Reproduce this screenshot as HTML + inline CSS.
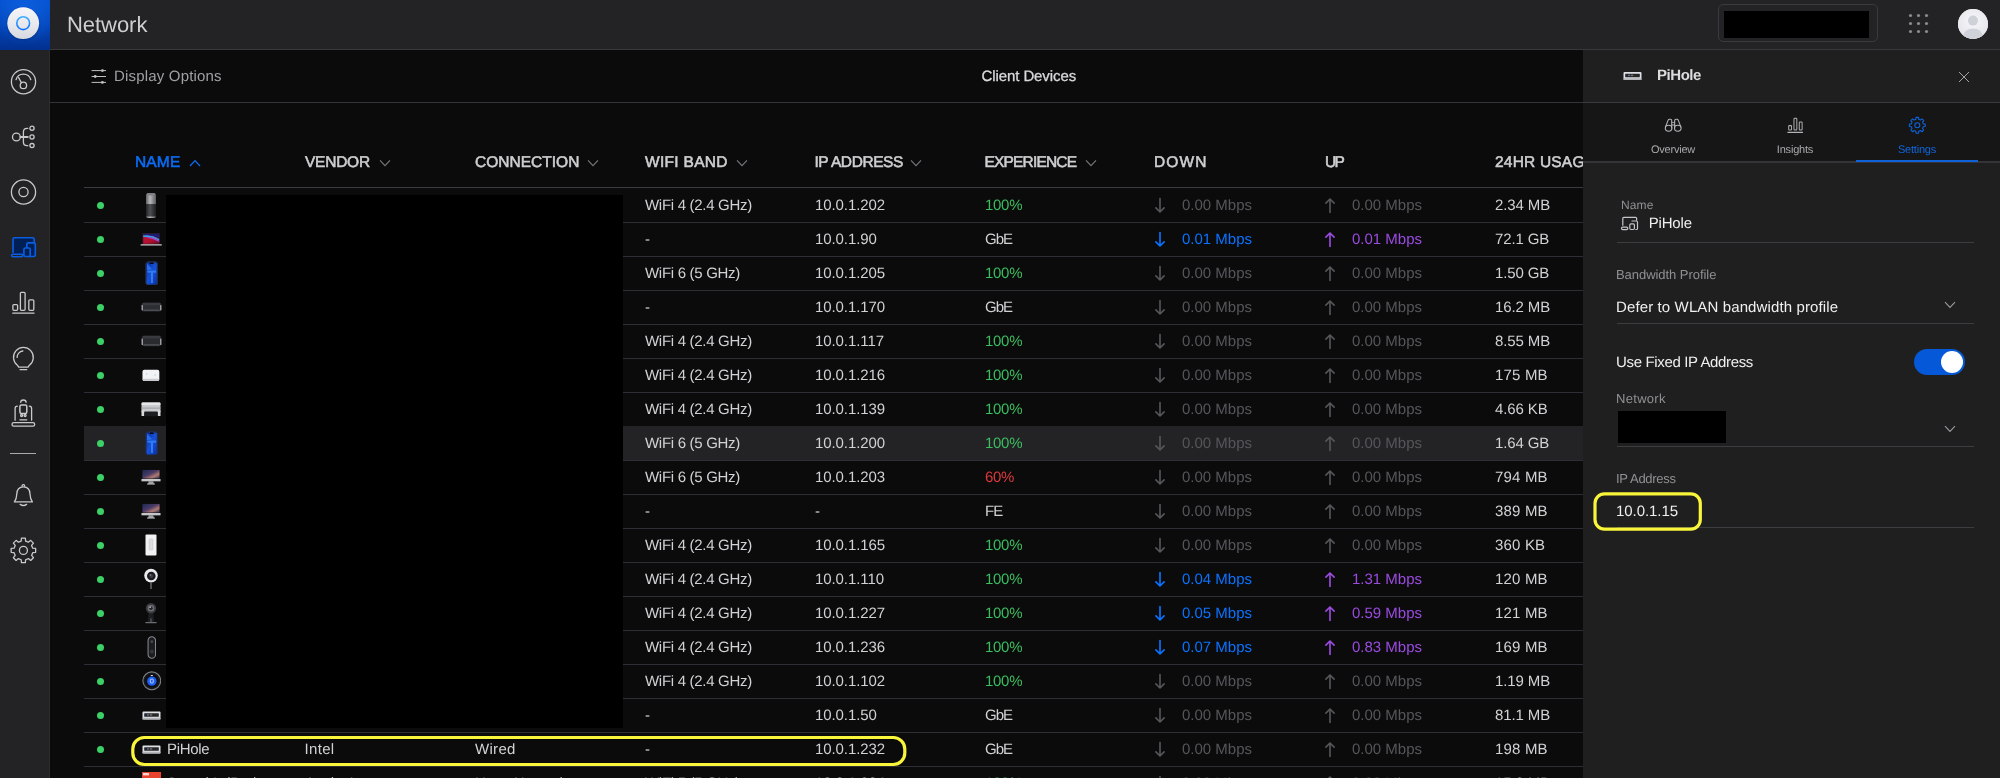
<!DOCTYPE html>
<html lang="en">
<head>
<meta charset="utf-8">
<title>Network - Client Devices</title>
<style>
*{box-sizing:border-box;margin:0;padding:0}
html,body{width:2000px;height:778px;overflow:hidden;background:#0b0b0c}
body{position:relative;will-change:transform;text-rendering:geometricPrecision;font-family:"Liberation Sans","DejaVu Sans",sans-serif;color:#d5d5d7;font-size:15px}
.abs{position:absolute}
/* top bar */
#top{position:absolute;left:0;top:0;width:2000px;height:50px;background:#232325;border-bottom:1px solid #38383c}
#logo{position:absolute;left:0;top:0;width:50px;height:50px;background:radial-gradient(circle at 50% 30%,rgba(20,110,240,.55) 0%,rgba(20,110,240,0) 70%),linear-gradient(180deg,#0654d2 0%,#0446bb 50%,#02308e 100%)}
#title{position:absolute;left:67px;top:10.5px;font-size:22px;line-height:28px;color:#cfcfd1;letter-spacing:-.05px}
#sitebox{position:absolute;left:1718px;top:4.4px;width:160px;height:38px;border:1px solid #3a3a3e;border-radius:5px}
#sitebox i{position:absolute;left:5px;top:5.6px;width:145px;height:27px;background:#000}
#avatar{position:absolute;left:1958.3px;top:8.6px;width:30px;height:30px;border-radius:50%;background:#f1f1f4;overflow:hidden}
/* side */
#side{position:absolute;left:0;top:50px;width:50px;height:728px;background:#232325;border-right:1px solid #2d2d30}
#side svg{position:absolute;left:0;overflow:visible}
/* subheader */
#sub{position:absolute;left:50px;top:50px;width:1533px;height:53px;border-bottom:1px solid #34353b}
#dopt{position:absolute;left:64px;top:17.1px;font-size:15px;line-height:20px;color:#9fa0a4;letter-spacing:.18px}
#ctitle{position:absolute;left:.8px;width:1956px;top:17.2px;text-align:center;font-size:15px;line-height:20px;color:#dadadc;letter-spacing:-.1px;-webkit-text-stroke:.3px #dadadc}
/* table */
.th{position:absolute;top:153.2px;font-size:15.5px;line-height:20px;font-weight:normal;-webkit-text-stroke:.55px;color:#cfcfd1;letter-spacing:.1px;white-space:nowrap}
.th svg{position:absolute;top:5.8px}
#hline{position:absolute;left:84px;top:187px;width:1499px;height:1px;background:#3a3b41}
.row{position:absolute;left:84px;width:1499px;height:35px;border-bottom:1px solid #2e2f34;line-height:33px;white-space:nowrap}
.row.hov{background:#232325}
.dot{position:absolute;left:13.3px;top:13.5px;width:7px;height:7px;border-radius:50%;background:#3cd067}
.ic{position:absolute;left:52.4px;top:0;width:30px;height:34px;display:flex;align-items:center;justify-content:center}
.ic svg{display:block}
.c{position:absolute;top:1.2px;font-size:15px;letter-spacing:-.3px;color:#d2d2d4}
.c.nm{left:83px}
.c.ip{letter-spacing:-.08px}.c.x{letter-spacing:-1px}.c.us{letter-spacing:-.12px}.c.sp{letter-spacing:0}
.c.g{color:#3bbd5f}.c.r{color:#dd393c}
.c.sp{color:#55565a}.c.sp.b{color:#0a72ff}.c.sp.p{color:#9a4be0}
.c.sp b{font-weight:normal;position:absolute;left:27px;top:0}
.ar{position:absolute;left:-1px;top:7px}
#redact{position:absolute;left:166px;top:195.3px;width:456.6px;height:533px;background:#000}
.hl{position:absolute;border:3.1px solid #f9f53a;border-radius:12px}
/* panel */
#panel{position:absolute;left:1583px;top:50px;width:417px;height:728px;background:#1f1f20}
#phead{position:absolute;left:0;top:0;width:417px;height:53px;border-bottom:1px solid #3a3b40}
#ptabs{position:absolute;left:0;top:53px;width:417px;background:#161617;border-bottom:2px solid #343438;height:60px}
.tab{position:absolute;top:0;width:122px;height:58px;text-align:center;font-size:11px;color:#a9a9ac;letter-spacing:-.2px}
.tab span{position:absolute;left:0;width:100%;top:40px;line-height:14px}
.tab svg{position:absolute;top:13.5px;left:50%;margin-left:-10px}
.tab.on{color:#1166dc}
.lbl{position:absolute;left:33px;font-size:13px;line-height:16px;color:#909093;letter-spacing:-.3px}
.val{position:absolute;left:33px;font-size:15px;line-height:20px;color:#efeff0;letter-spacing:-.35px}
.ul{position:absolute;left:34px;width:357px;height:1px;background:#3c3d41}
.chev{position:absolute;left:361px}
</style>
</head>
<body>
<!-- ===== top bar ===== -->
<div id="top">
  <div id="logo"><svg width="50" height="50" viewBox="0 0 50 50"><defs><linearGradient id="lg1" x1="0" y1="0" x2="0" y2="1"><stop offset="0" stop-color="#f6f6f9"/><stop offset=".55" stop-color="#e7e8ed"/><stop offset="1" stop-color="#d8d9e0"/></linearGradient><linearGradient id="lg2" x1="0" y1="0" x2="0" y2="1"><stop offset="0" stop-color="#3fb0ff"/><stop offset="1" stop-color="#0d72ff"/></linearGradient><filter id="lsh" x="-20%" y="-20%" width="140%" height="140%"><feGaussianBlur stdDeviation=".9"/></filter></defs><circle cx="23.2" cy="24" r="16" fill="#001a5a" opacity=".45" filter="url(#lsh)"/><circle cx="23.2" cy="23.2" r="15.9" fill="url(#lg1)"/><circle cx="23.2" cy="23.2" r="6.4" fill="none" stroke="url(#lg2)" stroke-width="1.6"/></svg></div>
  <div id="title">Network</div>
  <div id="sitebox"><i></i></div>
  <svg class="abs" style="left:1907px;top:12px" width="23" height="23" viewBox="0 0 23 23" fill="#8b8b8e">
    <circle cx="3.5" cy="3.5" r="1.6"/><circle cx="11.5" cy="3.5" r="1.6"/><circle cx="19.5" cy="3.5" r="1.6"/>
    <circle cx="3.5" cy="11.5" r="1.6"/><circle cx="11.5" cy="11.5" r="1.6"/><circle cx="19.5" cy="11.5" r="1.6"/>
    <circle cx="3.5" cy="19.5" r="1.6"/><circle cx="11.5" cy="19.5" r="1.6"/><circle cx="19.5" cy="19.5" r="1.6"/>
  </svg>
  <div id="avatar"><svg width="30" height="30" viewBox="0 0 30 30"><defs><filter id="avb"><feGaussianBlur stdDeviation=".7"/></filter><radialGradient id="av" cx=".5" cy=".4" r=".6"><stop offset="0" stop-color="#f7f7fa"/><stop offset="1" stop-color="#e4e5ea"/></radialGradient></defs><rect width="30" height="30" fill="url(#av)"/><g filter="url(#avb)"><circle cx="15" cy="11.6" r="5" fill="#cfd1d9"/><path d="M5 30 Q5 19.6 15 19.6 Q25 19.6 25 30Z" fill="#d0d2da"/></g></svg></div>
</div>

<!-- ===== sidebar ===== -->
<div id="side">
<svg style="top:18px" width="50" height="28" viewBox="0 0 50 28" fill="none" stroke="#c9c9cc" stroke-width="1.3" stroke-linecap="round" stroke-linejoin="round"><circle cx="23.5" cy="13.7" r="12.1"/><path d="M16 11.7 A7.7 7.7 0 0 1 30.8 11.7"/><path d="M18.6 9.6 L21.4 14.7"/><circle cx="23.4" cy="17.4" r="3.2"/></svg>
<svg style="top:74px" width="50" height="26" viewBox="0 0 50 26" fill="none" stroke="#c9c9cc" stroke-width="1.3" stroke-linecap="round" stroke-linejoin="round"><circle cx="16.4" cy="13" r="3.9"/><path d="M20.4 13 H27.8" stroke-width="1.9"/><path d="M27.8 4.3 H27 Q23.4 4.3 23.4 8 V18 Q23.4 21.7 27 21.7 H27.8"/><circle cx="32" cy="4.3" r="2.1"/><circle cx="32" cy="13" r="2.1"/><circle cx="32" cy="21.6" r="2.1"/></svg>
<svg style="top:128px" width="50" height="28" viewBox="0 0 50 28" fill="none" stroke="#c9c9cc" stroke-width="1.3" stroke-linecap="round" stroke-linejoin="round"><circle cx="23.5" cy="14" r="12.1"/><circle cx="23.5" cy="14" r="4.6"/></svg>
<svg style="top:185px" width="50" height="24" viewBox="0 0 50 24" fill="none" stroke="#0a5fe0" stroke-width="1.6" stroke-linecap="round" stroke-linejoin="round"><rect x="13" y="2.8" width="21.2" height="16" fill="#001f55" stroke="none"/><path d="M13 17.4 V4.2 Q13 2.8 14.4 2.8 H32.8 Q34.2 2.8 34.2 4.2 V7.6"/><rect x="11.7" y="19.2" width="11" height="2.6" rx="1.3" fill="#232325"/><rect x="26.8" y="7.9" width="8.5" height="13.6" rx="1.7" fill="#001f55"/><rect x="23.9" y="13" width="6.3" height="8.5" rx="1.5" fill="#001f55"/></svg>
<svg style="top:240px" width="50" height="26" viewBox="0 0 50 26" fill="none" stroke="#c9c9cc" stroke-width="1.3" stroke-linecap="round" stroke-linejoin="round"><rect x="12.9" y="14.6" width="4.7" height="5.7" rx="1"/><rect x="20.4" y="2.3" width="4.7" height="18" rx="1"/><rect x="28.8" y="9.8" width="5" height="10.5" rx="1"/><path d="M12.8 23.2 H34"/></svg>
<svg style="top:295px" width="50" height="28" viewBox="0 0 50 28" fill="none" stroke="#c9c9cc" stroke-width="1.3" stroke-linecap="round" stroke-linejoin="round"><path d="M18.7 22.1 L17.4 20.2 A9.9 9.9 0 1 1 29.4 20.2 L28.1 22.1 Z"/><path d="M17.1 12.4 A6.4 6.4 0 0 1 22.8 6"/><path d="M20.1 24.7 H26.7"/></svg>
<svg style="top:347px" width="50" height="32" viewBox="0 0 50 32" fill="none" stroke="#c9c9cc" stroke-width="1.3" stroke-linecap="round" stroke-linejoin="round"><path d="M20.7 5.3 Q20.7 3 23.4 3 Q26.1 3 26.1 5.3"/><rect x="19.9" y="8.1" width="6.9" height="8.5" rx="1.5" stroke-width="1.5"/><circle cx="21.6" cy="18.5" r="1"/><circle cx="25.1" cy="18.5" r="1"/><path d="M19.9 22.8 H26.8"/><path d="M15.1 23.2 V11.5 Q15.1 9.2 17.3 9.2"/><path d="M31.6 23.2 V11.5 Q31.6 9.2 29.4 9.2"/><rect x="12" y="25.7" width="22.7" height="3.5" rx="1.75"/></svg>
<div style="position:absolute;left:10px;top:403px;width:26px;height:1.4px;background:#aaaaad"></div>
<svg style="top:431px" width="50" height="28" viewBox="0 0 50 28" fill="none" stroke="#c9c9cc" stroke-width="1.3" stroke-linecap="round" stroke-linejoin="round"><path d="M22.1 5.2 Q22.1 3.6 23.4 3.6 Q24.7 3.6 24.7 5.2"/><path d="M14.4 20.9 Q16.6 18 16.8 13 Q17 5.8 23.4 5.8 Q29.8 5.8 30 13 Q30.2 18 32.4 20.9 Z"/><path d="M20.2 23.4 Q23.4 25.6 26.6 23.4"/></svg>
<svg style="top:486px" width="50" height="29" viewBox="0 0 50 29" fill="none" stroke="#c9c9cc" stroke-width="1.3" stroke-linecap="round" stroke-linejoin="round"><path d="M21.46 2.15 L25.34 2.15 L25.64 5.07 L28.42 6.21 L30.69 4.37 L33.43 7.11 L31.59 9.38 L32.73 12.16 L35.65 12.46 L35.65 16.34 L32.73 16.64 L31.59 19.42 L33.43 21.69 L30.69 24.43 L28.42 22.59 L25.64 23.73 L25.34 26.65 L21.46 26.65 L21.16 23.73 L18.38 22.59 L16.11 24.43 L13.37 21.69 L15.21 19.42 L14.07 16.64 L11.15 16.34 L11.15 12.46 L14.07 12.16 L15.21 9.38 L13.37 7.11 L16.11 4.37 L18.38 6.21 L21.16 5.07Z" stroke-linejoin="round"/><circle cx="23.4" cy="14.4" r="4"/></svg>
</div>

<!-- ===== sub header ===== -->
<div id="sub">
  <svg class="abs" style="left:41px;top:19px" width="16" height="15" viewBox="0 0 16 15" fill="none" stroke="#c0c1c4" stroke-width="1" stroke-linecap="round">
    <path d="M1 1.6 H14.6 M1 7.5 H14.6 M1 13.4 H14.6"/><circle cx="11.4" cy="1.6" r="1.45" fill="#c0c1c4" stroke="none"/><circle cx="4.2" cy="7.5" r="1.45" fill="#c0c1c4" stroke="none"/><circle cx="11.4" cy="13.4" r="1.45" fill="#c0c1c4" stroke="none"/>
  </svg>
  <div id="dopt">Display Options</div>
  <div id="ctitle">Client Devices</div>
</div>

<!-- ===== table header ===== -->
<div class="th" style="left:135px;color:#0a6cf5;letter-spacing:0.17px">NAME<svg style="left:54px" width="12" height="8" viewBox="0 0 12 8"><path d="M1 7 L6 1.6 L11 7" fill="none" stroke="#0a6cf5" stroke-width="1.3"/></svg></div>
<div class="th" style="left:305px;letter-spacing:-0.24px">VENDOR<svg style="left:74px" width="12" height="8" viewBox="0 0 12 8"><path d="M1 1.4 L6 6.6 L11 1.4" fill="none" stroke="#77787c" stroke-width="1.1"/></svg></div>
<div class="th" style="left:475px;letter-spacing:0.02px">CONNECTION<svg style="left:112px" width="12" height="8" viewBox="0 0 12 8"><path d="M1 1.4 L6 6.6 L11 1.4" fill="none" stroke="#77787c" stroke-width="1.1"/></svg></div>
<div class="th" style="left:645px;letter-spacing:0.3px">WIFI BAND<svg style="left:91px" width="12" height="8" viewBox="0 0 12 8"><path d="M1 1.4 L6 6.6 L11 1.4" fill="none" stroke="#77787c" stroke-width="1.1"/></svg></div>
<div class="th" style="left:814.4px;letter-spacing:-0.42px">IP ADDRESS<svg style="left:96px" width="12" height="8" viewBox="0 0 12 8"><path d="M1 1.4 L6 6.6 L11 1.4" fill="none" stroke="#77787c" stroke-width="1.1"/></svg></div>
<div class="th" style="left:984.5px;letter-spacing:-0.82px">EXPERIENCE<svg style="left:100px" width="12" height="8" viewBox="0 0 12 8"><path d="M1 1.4 L6 6.6 L11 1.4" fill="none" stroke="#77787c" stroke-width="1.1"/></svg></div>
<div class="th" style="left:1154px;letter-spacing:1.13px">DOWN</div>
<div class="th" style="left:1325px;letter-spacing:-1.6px">UP</div>
<div class="th" style="left:1495px;letter-spacing:0.2px">24HR USAGE</div>
<div id="hline"></div>

<!-- ===== rows ===== -->
<div class="row" style="top:188px"><i class="dot"></i><span class="ic"><svg width="12" height="27" viewBox="0 0 12 27"><defs><linearGradient id="eg" x1="0" x2="1"><stop offset="0" stop-color="#5f6165"/><stop offset=".4" stop-color="#b6b7ba"/><stop offset="1" stop-color="#5a5c60"/></linearGradient><linearGradient id="eg2" x1="0" x2="1"><stop offset="0" stop-color="#222325"/><stop offset=".4" stop-color="#4d4f53"/><stop offset="1" stop-color="#1d1e20"/></linearGradient></defs><rect x="1" y="1" width="10" height="25" rx="2.6" fill="url(#eg)"/><path d="M1 12 H11 V23.4 Q11 24.6 9.8 24.6 H2.2 Q1 24.6 1 23.4Z" fill="url(#eg2)"/><ellipse cx="6" cy="2.2" rx="4.4" ry="1.2" fill="#7d7f84"/></svg></span><span class="c" style="left:561px">WiFi 4 (2.4 GHz)</span><span class="c ip" style="left:731px">10.0.1.202</span><span class="c g" style="left:901px">100%</span><span class="c sp " style="left:1071px"><svg class="ar" width="12" height="18" viewBox="0 0 12 18"><path d="M6 2.5 V16 M1.9 11.9 L6 16 L10.1 11.9" fill="none" stroke="currentColor" stroke-width="1.65" stroke-linecap="round" stroke-linejoin="round"/></svg><b>0.00 Mbps</b></span><span class="c sp " style="left:1241px"><svg class="ar" width="12" height="18" viewBox="0 0 12 18"><path d="M6 16.5 V3 M1.9 7.1 L6 3 L10.1 7.1" fill="none" stroke="currentColor" stroke-width="1.65" stroke-linecap="round" stroke-linejoin="round"/></svg><b>0.00 Mbps</b></span><span class="c us" style="left:1411px;letter-spacing:-0.12px">2.34 MB</span></div>
<div class="row" style="top:222px"><i class="dot"></i><span class="ic"><svg width="22.4" height="13" viewBox="0 0 24 14"><defs><linearGradient id="mg" x1="0" y1="0" x2="1" y2="1"><stop offset="0" stop-color="#c4143a"/><stop offset=".6" stop-color="#b00f30"/><stop offset="1" stop-color="#5e0a22"/></linearGradient></defs><rect x="3" y="0.5" width="18" height="11.5" fill="url(#mg)" stroke="#1c1c20" stroke-width=".8"/><path d="M3.4 0.9 H20.6 V6.2 Q13 1.6 3.4 3.2 Z" fill="#1b1d74"/><path d="M3.4 2.8 Q12 1.4 20.6 6.4 L20.6 8 Q12 3.6 3.4 4.4Z" fill="#38a2e8"/><path d="M8 4 Q15 5 20.6 8.2 L20.6 9.8 Q14 6.4 8 5.2Z" fill="#a845d8"/><rect x="0.5" y="12.2" width="23" height="1.3" rx=".6" fill="#c9cacc"/></svg></span><span class="c" style="left:561px">-</span><span class="c ip" style="left:731px">10.0.1.90</span><span class="c x" style="left:901px">GbE</span><span class="c sp b" style="left:1071px"><svg class="ar" width="12" height="18" viewBox="0 0 12 18"><path d="M6 2.5 V16 M1.9 11.9 L6 16 L10.1 11.9" fill="none" stroke="currentColor" stroke-width="1.65" stroke-linecap="round" stroke-linejoin="round"/></svg><b>0.01 Mbps</b></span><span class="c sp p" style="left:1241px"><svg class="ar" width="12" height="18" viewBox="0 0 12 18"><path d="M6 16.5 V3 M1.9 7.1 L6 3 L10.1 7.1" fill="none" stroke="currentColor" stroke-width="1.65" stroke-linecap="round" stroke-linejoin="round"/></svg><b>0.01 Mbps</b></span><span class="c us" style="left:1411px;letter-spacing:-0.12px">72.1 GB</span></div>
<div class="row" style="top:256px"><i class="dot"></i><span class="ic"><svg width="13.4" height="24.9" viewBox="0 0 14 26"><defs><linearGradient id="ig" x1="0" y1="0" x2="1" y2="1"><stop offset="0" stop-color="#0a2a9a"/><stop offset=".5" stop-color="#1552d8"/><stop offset="1" stop-color="#0a2c9e"/></linearGradient></defs><rect x="0.9" y="0.9" width="12.2" height="24.2" rx="2.6" fill="url(#ig)" stroke="#232b45" stroke-width="1.3"/><rect x="6.4" y="12" width="1.8" height="11" fill="#3f8dff" opacity=".85"/><rect x="2.4" y="10" width="9.2" height="2.2" fill="#3a86ff" opacity=".8"/><path d="M2 2.4 L7.4 8.6 L2 9.6Z" fill="#2f7dff" opacity=".75"/><rect x="4.8" y="1.6" width="4.4" height="1.4" rx=".7" fill="#05070f"/></svg></span><span class="c" style="left:561px">WiFi 6 (5 GHz)</span><span class="c ip" style="left:731px">10.0.1.205</span><span class="c g" style="left:901px">100%</span><span class="c sp " style="left:1071px"><svg class="ar" width="12" height="18" viewBox="0 0 12 18"><path d="M6 2.5 V16 M1.9 11.9 L6 16 L10.1 11.9" fill="none" stroke="currentColor" stroke-width="1.65" stroke-linecap="round" stroke-linejoin="round"/></svg><b>0.00 Mbps</b></span><span class="c sp " style="left:1241px"><svg class="ar" width="12" height="18" viewBox="0 0 12 18"><path d="M6 16.5 V3 M1.9 7.1 L6 3 L10.1 7.1" fill="none" stroke="currentColor" stroke-width="1.65" stroke-linecap="round" stroke-linejoin="round"/></svg><b>0.00 Mbps</b></span><span class="c us" style="left:1411px;letter-spacing:-0.12px">1.50 GB</span></div>
<div class="row" style="top:290px"><i class="dot"></i><span class="ic"><svg width="21" height="10" viewBox="0 0 21 10"><rect x="0.5" y="0.8" width="20" height="8.6" rx="2.2" fill="#2d2e32"/><rect x="1.6" y="0.8" width="17.8" height="2.4" rx="1.2" fill="#3a3b40"/><rect x="0.6" y="3" width="1.3" height="5.4" rx=".6" fill="#a8aaaf"/><rect x="19.1" y="3" width="1.3" height="5.4" rx=".6" fill="#a8aaaf"/><rect x="2.2" y="7.4" width="16.6" height="1.6" rx=".8" fill="#4b4d52"/></svg></span><span class="c" style="left:561px">-</span><span class="c ip" style="left:731px">10.0.1.170</span><span class="c x" style="left:901px">GbE</span><span class="c sp " style="left:1071px"><svg class="ar" width="12" height="18" viewBox="0 0 12 18"><path d="M6 2.5 V16 M1.9 11.9 L6 16 L10.1 11.9" fill="none" stroke="currentColor" stroke-width="1.65" stroke-linecap="round" stroke-linejoin="round"/></svg><b>0.00 Mbps</b></span><span class="c sp " style="left:1241px"><svg class="ar" width="12" height="18" viewBox="0 0 12 18"><path d="M6 16.5 V3 M1.9 7.1 L6 3 L10.1 7.1" fill="none" stroke="currentColor" stroke-width="1.65" stroke-linecap="round" stroke-linejoin="round"/></svg><b>0.00 Mbps</b></span><span class="c us" style="left:1411px;letter-spacing:-0.12px">16.2 MB</span></div>
<div class="row" style="top:324px"><i class="dot"></i><span class="ic"><svg width="21" height="12" viewBox="0 0 21 12"><rect x="0.5" y="0.8" width="20" height="10.4" rx="2.4" fill="#2a2b2f"/><rect x="1.6" y="0.8" width="17.8" height="2.6" rx="1.3" fill="#393a3f"/><rect x="0.6" y="3.4" width="1.3" height="6.6" rx=".6" fill="#a8aaaf"/><rect x="19.1" y="3.4" width="1.3" height="6.6" rx=".6" fill="#a8aaaf"/><rect x="2.2" y="9" width="16.6" height="1.7" rx=".8" fill="#47494e"/></svg></span><span class="c" style="left:561px">WiFi 4 (2.4 GHz)</span><span class="c ip" style="left:731px">10.0.1.117</span><span class="c g" style="left:901px">100%</span><span class="c sp " style="left:1071px"><svg class="ar" width="12" height="18" viewBox="0 0 12 18"><path d="M6 2.5 V16 M1.9 11.9 L6 16 L10.1 11.9" fill="none" stroke="currentColor" stroke-width="1.65" stroke-linecap="round" stroke-linejoin="round"/></svg><b>0.00 Mbps</b></span><span class="c sp " style="left:1241px"><svg class="ar" width="12" height="18" viewBox="0 0 12 18"><path d="M6 16.5 V3 M1.9 7.1 L6 3 L10.1 7.1" fill="none" stroke="currentColor" stroke-width="1.65" stroke-linecap="round" stroke-linejoin="round"/></svg><b>0.00 Mbps</b></span><span class="c us" style="left:1411px;letter-spacing:-0.12px">8.55 MB</span></div>
<div class="row" style="top:358px"><i class="dot"></i><span class="ic"><svg width="17.8" height="12.8" viewBox="0 0 19 13"><rect x="0.5" y="0.5" width="18" height="12" rx="2" fill="#f2f3f5"/><rect x="1" y="10" width="17" height="2.5" rx="1" fill="#c9cbcf"/><circle cx="5" cy="5" r=".8" fill="#b8c8e8"/><circle cx="14" cy="6" r=".8" fill="#b8c8e8"/></svg></span><span class="c" style="left:561px">WiFi 4 (2.4 GHz)</span><span class="c ip" style="left:731px">10.0.1.216</span><span class="c g" style="left:901px">100%</span><span class="c sp " style="left:1071px"><svg class="ar" width="12" height="18" viewBox="0 0 12 18"><path d="M6 2.5 V16 M1.9 11.9 L6 16 L10.1 11.9" fill="none" stroke="currentColor" stroke-width="1.65" stroke-linecap="round" stroke-linejoin="round"/></svg><b>0.00 Mbps</b></span><span class="c sp " style="left:1241px"><svg class="ar" width="12" height="18" viewBox="0 0 12 18"><path d="M6 16.5 V3 M1.9 7.1 L6 3 L10.1 7.1" fill="none" stroke="currentColor" stroke-width="1.65" stroke-linecap="round" stroke-linejoin="round"/></svg><b>0.00 Mbps</b></span><span class="c us" style="left:1411px;letter-spacing:0.18px">175 MB</span></div>
<div class="row" style="top:392px"><i class="dot"></i><span class="ic"><svg width="20" height="15" viewBox="0 0 20 15"><rect x="0.5" y="0.5" width="19" height="10" rx="1.2" fill="#c9cacd"/><rect x="0.5" y="0.5" width="19" height="2.6" rx="1.2" fill="#e6e7e9"/><rect x="0.5" y="5.6" width="19" height="1" fill="#9c9ea2"/><rect x="3" y="9.6" width="14" height="4.6" rx="1.2" fill="#1c1d20"/><rect x="0.5" y="8.6" width="2.6" height="5.4" fill="#d9dadc"/><rect x="16.9" y="8.6" width="2.6" height="5.4" fill="#d9dadc"/></svg></span><span class="c" style="left:561px">WiFi 4 (2.4 GHz)</span><span class="c ip" style="left:731px">10.0.1.139</span><span class="c g" style="left:901px">100%</span><span class="c sp " style="left:1071px"><svg class="ar" width="12" height="18" viewBox="0 0 12 18"><path d="M6 2.5 V16 M1.9 11.9 L6 16 L10.1 11.9" fill="none" stroke="currentColor" stroke-width="1.65" stroke-linecap="round" stroke-linejoin="round"/></svg><b>0.00 Mbps</b></span><span class="c sp " style="left:1241px"><svg class="ar" width="12" height="18" viewBox="0 0 12 18"><path d="M6 16.5 V3 M1.9 7.1 L6 3 L10.1 7.1" fill="none" stroke="currentColor" stroke-width="1.65" stroke-linecap="round" stroke-linejoin="round"/></svg><b>0.00 Mbps</b></span><span class="c us" style="left:1411px;letter-spacing:-0.12px">4.66 KB</span></div>
<div class="row hov" style="top:426px"><i class="dot"></i><span class="ic"><svg width="13.4" height="24.9" viewBox="0 0 14 26"><defs><linearGradient id="ig" x1="0" y1="0" x2="1" y2="1"><stop offset="0" stop-color="#0a2a9a"/><stop offset=".5" stop-color="#1552d8"/><stop offset="1" stop-color="#0a2c9e"/></linearGradient></defs><rect x="0.9" y="0.9" width="12.2" height="24.2" rx="2.6" fill="url(#ig)" stroke="#232b45" stroke-width="1.3"/><rect x="6.4" y="12" width="1.8" height="11" fill="#3f8dff" opacity=".85"/><rect x="2.4" y="10" width="9.2" height="2.2" fill="#3a86ff" opacity=".8"/><path d="M2 2.4 L7.4 8.6 L2 9.6Z" fill="#2f7dff" opacity=".75"/><rect x="4.8" y="1.6" width="4.4" height="1.4" rx=".7" fill="#05070f"/></svg></span><span class="c" style="left:561px">WiFi 6 (5 GHz)</span><span class="c ip" style="left:731px">10.0.1.200</span><span class="c g" style="left:901px">100%</span><span class="c sp " style="left:1071px"><svg class="ar" width="12" height="18" viewBox="0 0 12 18"><path d="M6 2.5 V16 M1.9 11.9 L6 16 L10.1 11.9" fill="none" stroke="currentColor" stroke-width="1.65" stroke-linecap="round" stroke-linejoin="round"/></svg><b>0.00 Mbps</b></span><span class="c sp " style="left:1241px"><svg class="ar" width="12" height="18" viewBox="0 0 12 18"><path d="M6 16.5 V3 M1.9 7.1 L6 3 L10.1 7.1" fill="none" stroke="currentColor" stroke-width="1.65" stroke-linecap="round" stroke-linejoin="round"/></svg><b>0.00 Mbps</b></span><span class="c us" style="left:1411px;letter-spacing:-0.12px">1.64 GB</span></div>
<div class="row" style="top:460px"><i class="dot"></i><span class="ic"><svg width="20" height="17.6" viewBox="0 0 22 18"><defs><linearGradient id="sg" x1="0" y1="0" x2="1" y2="1"><stop offset="0" stop-color="#1a2a55"/><stop offset=".45" stop-color="#4a3a66"/><stop offset=".72" stop-color="#b07a72"/><stop offset="1" stop-color="#272c48"/></linearGradient></defs><rect x="0.5" y="0.5" width="21" height="13.5" rx="1" fill="#0c0c0e"/><rect x="1.6" y="1.5" width="18.8" height="9.4" fill="url(#sg)"/><rect x="0.5" y="11.4" width="21" height="2.6" fill="#c5c6c9"/><path d="M8.5 14 L13.5 14 L14.2 16.6 L7.8 16.6 Z" fill="#9fa1a5"/><rect x="6.5" y="16.4" width="9" height="1.1" rx=".5" fill="#d4d5d8"/></svg></span><span class="c" style="left:561px">WiFi 6 (5 GHz)</span><span class="c ip" style="left:731px">10.0.1.203</span><span class="c r" style="left:901px">60%</span><span class="c sp " style="left:1071px"><svg class="ar" width="12" height="18" viewBox="0 0 12 18"><path d="M6 2.5 V16 M1.9 11.9 L6 16 L10.1 11.9" fill="none" stroke="currentColor" stroke-width="1.65" stroke-linecap="round" stroke-linejoin="round"/></svg><b>0.00 Mbps</b></span><span class="c sp " style="left:1241px"><svg class="ar" width="12" height="18" viewBox="0 0 12 18"><path d="M6 16.5 V3 M1.9 7.1 L6 3 L10.1 7.1" fill="none" stroke="currentColor" stroke-width="1.65" stroke-linecap="round" stroke-linejoin="round"/></svg><b>0.00 Mbps</b></span><span class="c us" style="left:1411px;letter-spacing:0.18px">794 MB</span></div>
<div class="row" style="top:494px"><i class="dot"></i><span class="ic"><svg width="20" height="17.6" viewBox="0 0 22 18"><defs><linearGradient id="sg" x1="0" y1="0" x2="1" y2="1"><stop offset="0" stop-color="#1a2a55"/><stop offset=".45" stop-color="#4a3a66"/><stop offset=".72" stop-color="#b07a72"/><stop offset="1" stop-color="#272c48"/></linearGradient></defs><rect x="0.5" y="0.5" width="21" height="13.5" rx="1" fill="#0c0c0e"/><rect x="1.6" y="1.5" width="18.8" height="9.4" fill="url(#sg)"/><rect x="0.5" y="11.4" width="21" height="2.6" fill="#c5c6c9"/><path d="M8.5 14 L13.5 14 L14.2 16.6 L7.8 16.6 Z" fill="#9fa1a5"/><rect x="6.5" y="16.4" width="9" height="1.1" rx=".5" fill="#d4d5d8"/></svg></span><span class="c" style="left:561px">-</span><span class="c ip" style="left:731px">-</span><span class="c x" style="left:901px">FE</span><span class="c sp " style="left:1071px"><svg class="ar" width="12" height="18" viewBox="0 0 12 18"><path d="M6 2.5 V16 M1.9 11.9 L6 16 L10.1 11.9" fill="none" stroke="currentColor" stroke-width="1.65" stroke-linecap="round" stroke-linejoin="round"/></svg><b>0.00 Mbps</b></span><span class="c sp " style="left:1241px"><svg class="ar" width="12" height="18" viewBox="0 0 12 18"><path d="M6 16.5 V3 M1.9 7.1 L6 3 L10.1 7.1" fill="none" stroke="currentColor" stroke-width="1.65" stroke-linecap="round" stroke-linejoin="round"/></svg><b>0.00 Mbps</b></span><span class="c us" style="left:1411px;letter-spacing:0.18px">389 MB</span></div>
<div class="row" style="top:528px"><i class="dot"></i><span class="ic"><svg width="12" height="22" viewBox="0 0 12 22"><rect x="0.5" y="0.5" width="11" height="21" rx="1" fill="#f1f1f2"/><rect x="4.2" y="5" width="3.6" height="11" rx=".6" fill="#dcdde0" stroke="#c4c5c9" stroke-width=".6"/></svg></span><span class="c" style="left:561px">WiFi 4 (2.4 GHz)</span><span class="c ip" style="left:731px">10.0.1.165</span><span class="c g" style="left:901px">100%</span><span class="c sp " style="left:1071px"><svg class="ar" width="12" height="18" viewBox="0 0 12 18"><path d="M6 2.5 V16 M1.9 11.9 L6 16 L10.1 11.9" fill="none" stroke="currentColor" stroke-width="1.65" stroke-linecap="round" stroke-linejoin="round"/></svg><b>0.00 Mbps</b></span><span class="c sp " style="left:1241px"><svg class="ar" width="12" height="18" viewBox="0 0 12 18"><path d="M6 16.5 V3 M1.9 7.1 L6 3 L10.1 7.1" fill="none" stroke="currentColor" stroke-width="1.65" stroke-linecap="round" stroke-linejoin="round"/></svg><b>0.00 Mbps</b></span><span class="c us" style="left:1411px;letter-spacing:0.18px">360 KB</span></div>
<div class="row" style="top:562px"><i class="dot"></i><span class="ic"><svg width="16" height="22" viewBox="0 0 16 22"><circle cx="8" cy="7.6" r="6.8" fill="#e9eaec"/><circle cx="8.3" cy="8" r="4.3" fill="#1a1b1e"/><circle cx="8.3" cy="8" r="2" fill="#3a3c42"/><circle cx="7.4" cy="7" r=".8" fill="#8a8d94"/><rect x="7.3" y="14" width="1.4" height="7" fill="#6c6e73"/></svg></span><span class="c" style="left:561px">WiFi 4 (2.4 GHz)</span><span class="c ip" style="left:731px">10.0.1.110</span><span class="c g" style="left:901px">100%</span><span class="c sp b" style="left:1071px"><svg class="ar" width="12" height="18" viewBox="0 0 12 18"><path d="M6 2.5 V16 M1.9 11.9 L6 16 L10.1 11.9" fill="none" stroke="currentColor" stroke-width="1.65" stroke-linecap="round" stroke-linejoin="round"/></svg><b>0.04 Mbps</b></span><span class="c sp p" style="left:1241px"><svg class="ar" width="12" height="18" viewBox="0 0 12 18"><path d="M6 16.5 V3 M1.9 7.1 L6 3 L10.1 7.1" fill="none" stroke="currentColor" stroke-width="1.65" stroke-linecap="round" stroke-linejoin="round"/></svg><b>1.31 Mbps</b></span><span class="c us" style="left:1411px;letter-spacing:0.18px">120 MB</span></div>
<div class="row" style="top:596px"><i class="dot"></i><span class="ic"><svg width="14" height="24" viewBox="0 0 14 24"><path d="M4.8 11 L9.2 11 L10.4 21 L3.6 21 Z" fill="#1d1e21"/><circle cx="7" cy="7.2" r="5.2" fill="#3a3b3f"/><circle cx="7" cy="7.2" r="3.3" fill="#6c6e74"/><circle cx="7" cy="7.2" r="1.7" fill="#24252a"/><circle cx="6.2" cy="6.2" r=".8" fill="#c9cbd0"/><rect x="1.2" y="21" width="11.6" height="1.2" rx=".6" fill="#6a6c71"/><rect x="6.4" y="17.4" width="1.2" height="3.6" fill="#5b5d62"/></svg></span><span class="c" style="left:561px">WiFi 4 (2.4 GHz)</span><span class="c ip" style="left:731px">10.0.1.227</span><span class="c g" style="left:901px">100%</span><span class="c sp b" style="left:1071px"><svg class="ar" width="12" height="18" viewBox="0 0 12 18"><path d="M6 2.5 V16 M1.9 11.9 L6 16 L10.1 11.9" fill="none" stroke="currentColor" stroke-width="1.65" stroke-linecap="round" stroke-linejoin="round"/></svg><b>0.05 Mbps</b></span><span class="c sp p" style="left:1241px"><svg class="ar" width="12" height="18" viewBox="0 0 12 18"><path d="M6 16.5 V3 M1.9 7.1 L6 3 L10.1 7.1" fill="none" stroke="currentColor" stroke-width="1.65" stroke-linecap="round" stroke-linejoin="round"/></svg><b>0.59 Mbps</b></span><span class="c us" style="left:1411px;letter-spacing:0.18px">121 MB</span></div>
<div class="row" style="top:630px"><i class="dot"></i><span class="ic"><svg width="9.6" height="23" viewBox="0 0 10 26"><rect x="0.8" y="0.8" width="8.4" height="24.4" rx="4.2" fill="#1b1c1f" stroke="#85878c" stroke-width="1.2"/><circle cx="5" cy="6.4" r="1.5" fill="#4a4c52"/><circle cx="5" cy="17.6" r="1.7" fill="#2c2d31" stroke="#55575d" stroke-width=".6"/></svg></span><span class="c" style="left:561px">WiFi 4 (2.4 GHz)</span><span class="c ip" style="left:731px">10.0.1.236</span><span class="c g" style="left:901px">100%</span><span class="c sp b" style="left:1071px"><svg class="ar" width="12" height="18" viewBox="0 0 12 18"><path d="M6 2.5 V16 M1.9 11.9 L6 16 L10.1 11.9" fill="none" stroke="currentColor" stroke-width="1.65" stroke-linecap="round" stroke-linejoin="round"/></svg><b>0.07 Mbps</b></span><span class="c sp p" style="left:1241px"><svg class="ar" width="12" height="18" viewBox="0 0 12 18"><path d="M6 16.5 V3 M1.9 7.1 L6 3 L10.1 7.1" fill="none" stroke="currentColor" stroke-width="1.65" stroke-linecap="round" stroke-linejoin="round"/></svg><b>0.83 Mbps</b></span><span class="c us" style="left:1411px;letter-spacing:0.18px">169 MB</span></div>
<div class="row" style="top:664px"><i class="dot"></i><span class="ic"><svg width="19.6" height="19.6" viewBox="0 0 22 22"><circle cx="11" cy="11" r="10" fill="#17181b" stroke="#7d7f85" stroke-width="1.2"/><circle cx="11" cy="11" r="7.4" fill="#0c0d10"/><circle cx="11" cy="11.4" r="5.3" fill="#1d5df0"/><rect x="9.4" y="9.2" width="3.2" height="4.2" rx=".6" fill="none" stroke="#d6e4ff" stroke-width=".9"/><rect x="9.6" y="4.6" width="2.8" height="1" rx=".5" fill="#d8d9dc"/></svg></span><span class="c" style="left:561px">WiFi 4 (2.4 GHz)</span><span class="c ip" style="left:731px">10.0.1.102</span><span class="c g" style="left:901px">100%</span><span class="c sp " style="left:1071px"><svg class="ar" width="12" height="18" viewBox="0 0 12 18"><path d="M6 2.5 V16 M1.9 11.9 L6 16 L10.1 11.9" fill="none" stroke="currentColor" stroke-width="1.65" stroke-linecap="round" stroke-linejoin="round"/></svg><b>0.00 Mbps</b></span><span class="c sp " style="left:1241px"><svg class="ar" width="12" height="18" viewBox="0 0 12 18"><path d="M6 16.5 V3 M1.9 7.1 L6 3 L10.1 7.1" fill="none" stroke="currentColor" stroke-width="1.65" stroke-linecap="round" stroke-linejoin="round"/></svg><b>0.00 Mbps</b></span><span class="c us" style="left:1411px;letter-spacing:-0.12px">1.19 MB</span></div>
<div class="row" style="top:698px"><i class="dot"></i><span class="ic"><svg width="19" height="9" viewBox="0 0 19 9"><rect x="0.5" y="0.5" width="18" height="8" rx="1" fill="#dfe0e3"/><rect x="2.2" y="2.2" width="14.6" height="3.6" rx=".5" fill="#26272b"/><rect x="5" y="3.2" width="2.2" height="1.4" fill="#4e6fa8"/><rect x="8" y="3.2" width="2.2" height="1.4" fill="#8a6d4a"/><rect x="0.5" y="6.8" width="18" height="1.7" rx=".6" fill="#b4b5b9"/></svg></span><span class="c" style="left:561px">-</span><span class="c ip" style="left:731px">10.0.1.50</span><span class="c x" style="left:901px">GbE</span><span class="c sp " style="left:1071px"><svg class="ar" width="12" height="18" viewBox="0 0 12 18"><path d="M6 2.5 V16 M1.9 11.9 L6 16 L10.1 11.9" fill="none" stroke="currentColor" stroke-width="1.65" stroke-linecap="round" stroke-linejoin="round"/></svg><b>0.00 Mbps</b></span><span class="c sp " style="left:1241px"><svg class="ar" width="12" height="18" viewBox="0 0 12 18"><path d="M6 16.5 V3 M1.9 7.1 L6 3 L10.1 7.1" fill="none" stroke="currentColor" stroke-width="1.65" stroke-linecap="round" stroke-linejoin="round"/></svg><b>0.00 Mbps</b></span><span class="c us" style="left:1411px;letter-spacing:-0.12px">81.1 MB</span></div>
<div class="row" style="top:732px"><i class="dot"></i><span class="ic"><svg width="19" height="9" viewBox="0 0 19 9"><rect x="0.5" y="0.5" width="18" height="8" rx="1" fill="#dfe0e3"/><rect x="2.2" y="2.2" width="14.6" height="3.6" rx=".5" fill="#26272b"/><rect x="5" y="3.2" width="2.2" height="1.4" fill="#4e6fa8"/><rect x="8" y="3.2" width="2.2" height="1.4" fill="#8a6d4a"/><rect x="0.5" y="6.8" width="18" height="1.7" rx=".6" fill="#b4b5b9"/></svg></span><span class="c nm">PiHole</span><span class="c" style="left:220.6px;letter-spacing:.3px">Intel</span><span class="c" style="left:391px;letter-spacing:.3px">Wired</span><span class="c" style="left:561px">-</span><span class="c ip" style="left:731px">10.0.1.232</span><span class="c x" style="left:901px">GbE</span><span class="c sp " style="left:1071px"><svg class="ar" width="12" height="18" viewBox="0 0 12 18"><path d="M6 2.5 V16 M1.9 11.9 L6 16 L10.1 11.9" fill="none" stroke="currentColor" stroke-width="1.65" stroke-linecap="round" stroke-linejoin="round"/></svg><b>0.00 Mbps</b></span><span class="c sp " style="left:1241px"><svg class="ar" width="12" height="18" viewBox="0 0 12 18"><path d="M6 16.5 V3 M1.9 7.1 L6 3 L10.1 7.1" fill="none" stroke="currentColor" stroke-width="1.65" stroke-linecap="round" stroke-linejoin="round"/></svg><b>0.00 Mbps</b></span><span class="c us" style="left:1411px;letter-spacing:0.18px">198 MB</span></div>
<div class="row" style="top:766px;border:0"><span class="ic" style="align-items:flex-start;padding-top:6px"><svg width="19" height="8" viewBox="0 0 19 8"><rect width="19" height="8" fill="#e8432e"/><rect x="1" y="1" width="6" height="2.4" fill="#fbd6cf"/></svg></span><span class="c nm" style="top:.6px">Joseph's iPad</span><span class="c" style="left:221px;top:.6px">Apple, Inc.</span><span class="c" style="left:391px;top:.6px">HomeNetwork</span><span class="c" style="left:561px;top:.6px">WiFi 5 (5 GHz)</span><span class="c ip" style="left:731px;top:.6px">10.0.1.204</span><span class="c g" style="left:901px;top:.6px">100%</span><span class="c sp" style="left:1071px;top:.6px"><svg class="ar" width="12" height="18" viewBox="0 0 12 18"><path d="M6 2.5 V16 M1.9 11.9 L6 16 L10.1 11.9" fill="none" stroke="currentColor" stroke-width="1.65" stroke-linecap="round" stroke-linejoin="round"/></svg><b>0.00 Mbps</b></span><span class="c sp" style="left:1241px;top:.6px"><svg class="ar" width="12" height="18" viewBox="0 0 12 18"><path d="M6 16.5 V3 M1.9 7.1 L6 3 L10.1 7.1" fill="none" stroke="currentColor" stroke-width="1.65" stroke-linecap="round" stroke-linejoin="round"/></svg><b>0.00 Mbps</b></span><span class="c us" style="left:1411px;top:.6px">15.3 MB</span></div>

<div id="redact"></div>
<svg class="abs" style="left:125px;top:730px" width="790" height="42" viewBox="125 730 790 42"><rect x="132.8" y="737.5" width="772" height="27" rx="11.5" fill="none" stroke="#f9f53a" stroke-width="3.2"/></svg>

<!-- ===== right panel ===== -->
<div id="panel">
  <div id="phead">
    <svg class="abs" style="left:40px;top:21px" width="19" height="10" viewBox="0 0 19 9"><rect x="0.5" y="0.5" width="18" height="8" rx="1" fill="#dfe0e3"/><rect x="2.2" y="2.2" width="14.6" height="3.6" rx=".5" fill="#26272b"/><rect x="5" y="3.2" width="2.2" height="1.4" fill="#4e6fa8"/><rect x="8" y="3.2" width="2.2" height="1.4" fill="#8a6d4a"/><rect x="0.5" y="6.8" width="18" height="1.7" rx=".6" fill="#b4b5b9"/></svg>
    <div class="abs" style="left:74px;top:16.4px;font-size:15px;line-height:20px;font-weight:bold;color:#dcdcde;letter-spacing:-.45px">PiHole</div>
    <svg class="abs" style="left:375px;top:21px" width="12" height="12" viewBox="0 0 12 12"><path d="M1 1 L11 11 M11 1 L1 11" stroke="#a2a4a8" stroke-width="1" fill="none"/></svg>
  </div>
  <div id="ptabs">
    <div class="tab" style="left:29px"><svg width="18.4" height="14.8" preserveAspectRatio="none" style="margin-left:-9.2px;top:14.8px" viewBox="0 0 20 18" stroke="#b4b4b7" stroke-width="1.15" stroke-linecap="round" stroke-linejoin="round" fill="none"><circle cx="5" cy="12.4" r="3.6"/><circle cx="15" cy="12.4" r="3.6"/><path d="M1.6 11 L4.4 2.8 Q4.8 1.6 6 1.6 H7 Q8.4 1.6 8.4 3 V12.4"/><path d="M18.4 11 L15.6 2.8 Q15.2 1.6 14 1.6 H13 Q11.6 1.6 11.6 3 V12.4"/><path d="M8.4 5.6 H11.6 M8.4 8.6 H11.6"/></svg><span>Overview</span></div>
    <div class="tab" style="left:151px"><svg width="16.8" height="16.5" preserveAspectRatio="none" style="margin-left:-8.4px;top:14.1px" viewBox="0 0 20 18" stroke="#b4b4b7" stroke-width="1.15" stroke-linecap="round" stroke-linejoin="round" fill="none"><rect x="2" y="9.4" width="3.4" height="4.8" rx=".8"/><rect x="8.3" y="1.4" width="3.4" height="12.8" rx=".8"/><rect x="14.6" y="5.4" width="3.4" height="8.8" rx=".8"/><path d="M1 16.8 H19"/></svg><span>Insights</span></div>
    <div class="tab on" style="left:273px"><svg width="18.6" height="18.6" viewBox="0 0 20 20" stroke="#0f64dc" stroke-width="1.15" stroke-linecap="round" stroke-linejoin="round" fill="none" style="top:13.1px;margin-left:-9.3px"><path d="M8.65 1.51 L11.35 1.51 L11.54 3.58 L13.45 4.37 L15.05 3.04 L16.96 4.95 L15.63 6.55 L16.42 8.46 L18.49 8.65 L18.49 11.35 L16.42 11.54 L15.63 13.45 L16.96 15.05 L15.05 16.96 L13.45 15.63 L11.54 16.42 L11.35 18.49 L8.65 18.49 L8.46 16.42 L6.55 15.63 L4.95 16.96 L3.04 15.05 L4.37 13.45 L3.58 11.54 L1.51 11.35 L1.51 8.65 L3.58 8.46 L4.37 6.55 L3.04 4.95 L4.95 3.04 L6.55 4.37 L8.46 3.58Z" stroke-linejoin="round"/><circle cx="10" cy="10" r="2.7"/></svg><span>Settings</span></div>
    <div class="abs" style="left:273px;top:56.8px;width:122px;height:2.2px;background:#0f62d9"></div>
  </div>

  <div class="lbl" style="left:38px;top:147px;font-size:12px;letter-spacing:.1px">Name</div>
  <svg class="abs" style="left:37px;top:165px;overflow:visible" width="19" height="16" viewBox="0 0 19 16" fill="none" stroke="#c4c5c8" stroke-width="1.2" stroke-linecap="round" stroke-linejoin="round"><path d="M2.8 10.2 V3.3 Q2.8 2.3 3.8 2.3 H15.6 Q16.6 2.3 16.6 3.3 V5.2"/><rect x="1.5" y="12.1" width="6.3" height="2.5" rx="1.25"/><path d="M12 6 H16.4 Q17.5 6 17.5 7.1 V13.4 Q17.5 14.5 16.4 14.5 H15.8"/><rect x="9.8" y="8.9" width="4.6" height="5.6" rx="1.2"/></svg>
  <div class="val" style="left:65.8px;top:163.8px;letter-spacing:-.2px">PiHole</div>
  <div class="ul" style="top:192px"></div>

  <div class="lbl" style="top:217px;letter-spacing:-.05px">Bandwidth Profile</div>
  <div class="val" style="top:248.3px;letter-spacing:.12px">Defer to WLAN bandwidth profile</div>
  <svg class="chev" style="top:251px" width="12" height="8" viewBox="0 0 12 8"><path d="M1 1.2 L6 6.4 L11 1.2" fill="none" stroke="#9a9b9f" stroke-width="1.1"/></svg>
  <div class="ul" style="top:273px"></div>

  <div class="val" style="top:303px">Use Fixed IP Address</div>
  <div class="abs" style="left:331px;top:299px;width:51px;height:26px;border-radius:13px;background:#0559d8"><i style="position:absolute;right:2px;top:2px;width:22px;height:22px;border-radius:50%;background:#fff"></i></div>

  <div class="lbl" style="top:341px;letter-spacing:.3px">Network</div>
  <div class="abs" style="left:35px;top:361px;width:108px;height:32px;background:#000"></div>
  <svg class="chev" style="top:375px" width="12" height="8" viewBox="0 0 12 8"><path d="M1 1.2 L6 6.4 L11 1.2" fill="none" stroke="#9a9b9f" stroke-width="1.1"/></svg>
  <div class="ul" style="top:396px"></div>

  <div class="lbl" style="top:421px">IP Address</div>
  <div class="val" style="top:452.4px;letter-spacing:-.06px">10.0.1.15</div>
  <div class="ul" style="top:477px"></div>
  <svg class="abs" style="left:5px;top:437px" width="120" height="50" viewBox="1588 487 120 50"><rect x="1595" y="493.8" width="105.3" height="35.3" rx="9.5" fill="none" stroke="#f9f53a" stroke-width="3.2"/></svg>
</div>
</body>
</html>
